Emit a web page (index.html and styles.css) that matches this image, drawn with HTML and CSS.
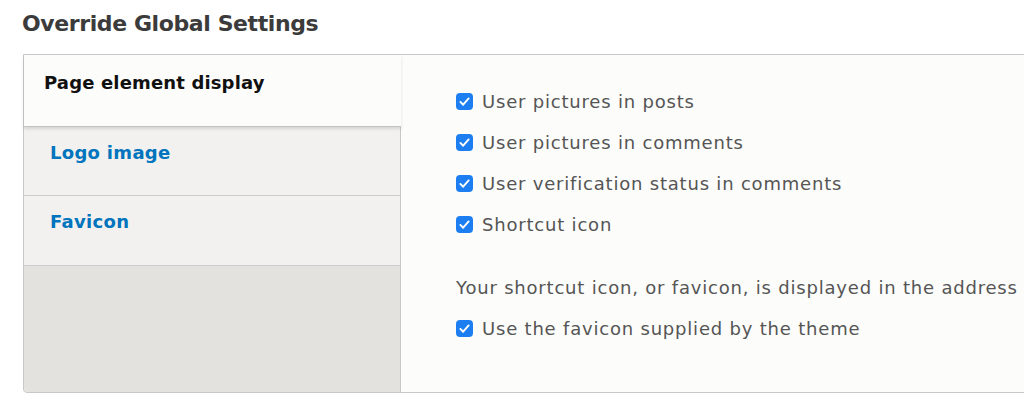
FILE: index.html
```html
<!DOCTYPE html>
<html>
<head>
    <meta charset="utf-8">
    <link rel="stylesheet" href="styles.css">
</head>
<body>
    <h2 class="title">Override Global Settings</h2>

    <div class="vertical-tabs">
        <ul class="tab-list">
            <li class="tab selected"><a href="#">Page element display</a></li>
            <li class="tab"><a href="#">Logo image</a></li>
            <li class="tab"><a href="#">Favicon</a></li>
        </ul>

        <div class="tab-pane">
            <div class="form-item">
                <span class="check"><svg viewBox="0 0 18 18"><path d="M4.6 9.4l3 3 5.8-6.6"/></svg></span>
                <label>User pictures in posts</label>
            </div>
            <div class="form-item">
                <span class="check"><svg viewBox="0 0 18 18"><path d="M4.6 9.4l3 3 5.8-6.6"/></svg></span>
                <label>User pictures in comments</label>
            </div>
            <div class="form-item">
                <span class="check"><svg viewBox="0 0 18 18"><path d="M4.6 9.4l3 3 5.8-6.6"/></svg></span>
                <label>User verification status in comments</label>
            </div>
            <div class="form-item">
                <span class="check"><svg viewBox="0 0 18 18"><path d="M4.6 9.4l3 3 5.8-6.6"/></svg></span>
                <label>Shortcut icon</label>
            </div>

            <p class="description">Your shortcut icon, or favicon, is displayed in the address</p>

            <div class="form-item">
                <span class="check"><svg viewBox="0 0 18 18"><path d="M4.6 9.4l3 3 5.8-6.6"/></svg></span>
                <label>Use the favicon supplied by the theme</label>
            </div>
        </div>
    </div>
</body>
</html>
```

FILE: styles.css
```css
body {
    margin: 0;
    background: #ffffff;
    font-family: "DejaVu Sans", sans-serif;
    overflow: hidden;
}

.title {
    margin: 0;
    padding: 11px 0 0 22px;
    height: 54px;
    box-sizing: border-box;
    font-size: 22px;
    letter-spacing: -0.4px;
    font-weight: bold;
    color: #3b3b3b;
}

.vertical-tabs {
    display: flex;
    margin-left: 23px;
    width: 1100px;
    height: 337px;
    border: 1px solid #c8c8c8;
    border-radius: 0 0 0 4px;
    background: #fcfcfa;
}

.tab-list {
    list-style: none;
    margin: 0;
    padding: 0;
    width: 376px;
    flex-shrink: 0;
    background: #e4e2df;
    border-right: 1px solid #c8c8c8;
    border-radius: 0 0 0 4px;
}

.tab {
    height: 69px;
    box-sizing: border-box;
    padding: 15px 0 0 26px;
    background: #f2f1ef;
    border-bottom: 1px solid #cccccc;
}

.tab:last-child {
    height: 70px;
}

.tab a {
    font-size: 18px;
    letter-spacing: 0.3px;
    font-weight: bold;
    color: #0074bd;
    text-decoration: none;
}

.tab.selected {
    height: 72px;
    padding: 17px 0 0 20px;
    margin-right: -1px;
    background: #fcfcfa;
    border-bottom: 1px solid #c4c4c4;
    box-shadow: 0 2px 3px rgba(0, 0, 0, 0.12);
    position: relative;
}

.tab.selected a {
    color: #111111;
    letter-spacing: 0.15px;
}

.tab-pane {
    padding: 26px 0 0 55px;
    color: #555555;
    font-size: 18px;
    letter-spacing: 0.8px;
}

.form-item {
    display: flex;
    align-items: center;
    height: 41px;
}

.form-item label {
    white-space: nowrap;
}

.check {
    width: 17px;
    height: 17px;
    margin-right: 9px;
    border-radius: 4px;
    background: #1c7ef0;
    flex-shrink: 0;
}

.check svg {
    display: block;
    width: 17px;
    height: 17px;
    fill: none;
    stroke: #ffffff;
    stroke-width: 2;
    stroke-linecap: round;
    stroke-linejoin: round;
}

.description {
    margin: 22px 0 0 0;
    height: 41px;
    line-height: 41px;
    white-space: nowrap;
}
```
